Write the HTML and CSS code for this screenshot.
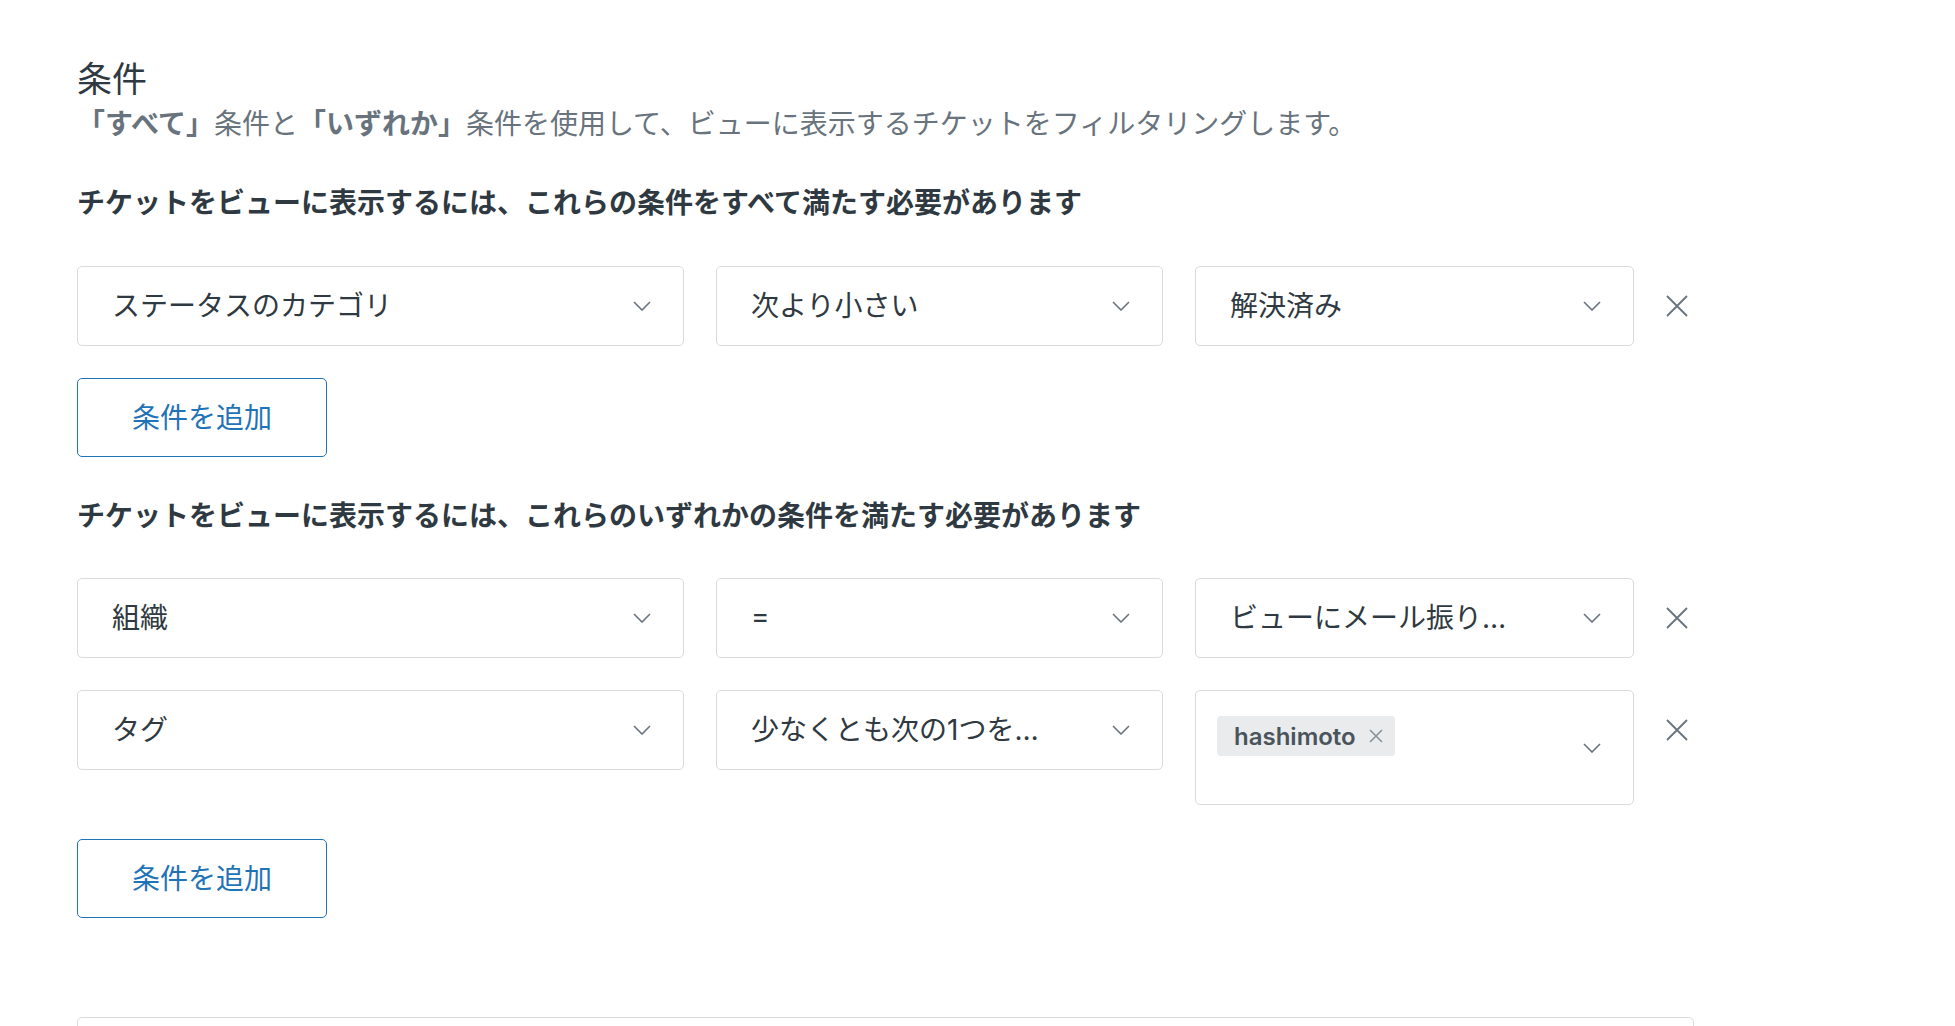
FILE: index.html
```html
<!DOCTYPE html>
<html lang="ja">
<head>
<meta charset="UTF-8">
<title>条件</title>
<link rel="stylesheet" href="styles.css">
</head>
<body>

<div class="page">
    <h2 class="title">条件</h2>
    <p class="hint"><b>「すべて」</b>条件と<b>「いずれか」</b>条件を使用して、ビューに表示するチケットをフィルタリングします。</p>

    <!-- すべて -->
    <section class="group">
        <h3 class="group-label">チケットをビューに表示するには、これらの条件をすべて満たす必要があります</h3>
        <div class="rules">
            <div class="rule">
                <div class="field"><span class="value">ステータスのカテゴリ</span><svg class="chevron" viewBox="0 0 18 10"><path d="M1 1l8 8 8-8"/></svg></div>
                <div class="field"><span class="value">次より小さい</span><svg class="chevron" viewBox="0 0 18 10"><path d="M1 1l8 8 8-8"/></svg></div>
                <div class="field"><span class="value">解決済み</span><svg class="chevron" viewBox="0 0 18 10"><path d="M1 1l8 8 8-8"/></svg></div>
                <button class="remove"><svg viewBox="0 0 22 22"><path d="M1 1l20 20M21 1L1 21"/></svg></button>
            </div>
        </div>
        <button class="add">条件を追加</button>
    </section>

    <!-- いずれか -->
    <section class="group">
        <h3 class="group-label">チケットをビューに表示するには、これらのいずれかの条件を満たす必要があります</h3>
        <div class="rules">
            <div class="rule">
                <div class="field"><span class="value">組織</span><svg class="chevron" viewBox="0 0 18 10"><path d="M1 1l8 8 8-8"/></svg></div>
                <div class="field"><span class="value">=</span><svg class="chevron" viewBox="0 0 18 10"><path d="M1 1l8 8 8-8"/></svg></div>
                <div class="field"><span class="value">ビューにメール振り…</span><svg class="chevron" viewBox="0 0 18 10"><path d="M1 1l8 8 8-8"/></svg></div>
                <button class="remove"><svg viewBox="0 0 22 22"><path d="M1 1l20 20M21 1L1 21"/></svg></button>
            </div>
            <div class="rule">
                <div class="field"><span class="value">タグ</span><svg class="chevron" viewBox="0 0 18 10"><path d="M1 1l8 8 8-8"/></svg></div>
                <div class="field"><span class="value">少なくとも次の1つを…</span><svg class="chevron" viewBox="0 0 18 10"><path d="M1 1l8 8 8-8"/></svg></div>
                <div class="field multi">
                    <div class="tags">
                        <span class="tag">hashimoto<svg viewBox="0 0 14 14"><path d="M1 1l12 12M13 1L1 13"/></svg></span>
                    </div>
                    <svg class="chevron" viewBox="0 0 18 10"><path d="M1 1l8 8 8-8"/></svg>
                </div>
                <button class="remove"><svg viewBox="0 0 22 22"><path d="M1 1l20 20M21 1L1 21"/></svg></button>
            </div>
        </div>
        <button class="add">条件を追加</button>
    </section>

    <div class="next-card"></div>
</div>

</body>
</html>
```

FILE: styles.css
```css
body {
    margin: 0;
    background: #ffffff;
    color: #2f3941;
    font-family: Inter, "Noto Sans CJK JP", sans-serif;
}
.page {
    width: 1617px;
    padding: 57px 0 0 77px;
}
.title {
    margin: 0;
    font-size: 35px;
    font-weight: 400;
    line-height: 45px;
}
.hint {
    margin: 3px 0 0;
    font-size: 28px;
    line-height: 39px;
    color: #68737d;
}
.hint b {
    font-weight: 700;
}
.group-label {
    margin: 39px 0 43px;
    font-size: 28px;
    font-weight: 700;
    line-height: 40px;
}
.group + .group .group-label {
    margin: 39px 0 42px;
}
.rules {
    display: flex;
    flex-direction: column;
    gap: 32px;
}
.rule {
    display: grid;
    grid-template-columns: 607px 447px 439px 22px;
    column-gap: 32px;
    align-items: start;
}
.field {
    display: flex;
    align-items: center;
    box-sizing: border-box;
    height: 80px;
    padding: 0 32px 0 34px;
    border: 1px solid #d8dcde;
    border-radius: 5px;
    font-size: 28px;
}
.field .value {
    flex: 1;
    margin-bottom: 4px;
    white-space: nowrap;
    overflow: hidden;
    text-overflow: ellipsis;
}
.chevron {
    flex: none;
    width: 18px;
    height: 10px;
    margin-left: 16px;
    fill: none;
    stroke: #68737d;
    stroke-width: 1.6;
}
.field.multi {
    height: 115px;
    padding-left: 21px;
}
.field.multi .tags {
    flex: 1;
    align-self: flex-start;
    margin-top: 25px;
}
.tag {
    display: inline-flex;
    align-items: center;
    gap: 13px;
    height: 40px;
    padding: 0 12px 0 17px;
    border-radius: 4px;
    background: #e9ebed;
    color: #49545c;
    font-size: 24px;
    font-weight: 600;
}
.tag svg {
    width: 14px;
    height: 14px;
    fill: none;
    stroke: #87929d;
    stroke-width: 1.6;
}
.remove {
    display: flex;
    align-items: center;
    justify-content: center;
    width: 22px;
    height: 80px;
    padding: 0;
    border: none;
    background: none;
    cursor: pointer;
}
.remove svg {
    width: 22px;
    height: 22px;
    fill: none;
    stroke: #68737d;
    stroke-width: 1.8;
}
.add {
    display: block;
    width: 250px;
    height: 79px;
    margin-top: 32px;
    padding: 0 0 4px;
    border: 1px solid #1f73b7;
    border-radius: 5px;
    background: #ffffff;
    color: #1f73b7;
    font-family: inherit;
    font-size: 28px;
    cursor: pointer;
}
.group + .group .add {
    margin-top: 34px;
}
.next-card {
    height: 200px;
    margin-top: 99px;
    border: 1px solid #d8dcde;
    border-radius: 5px;
}
```
